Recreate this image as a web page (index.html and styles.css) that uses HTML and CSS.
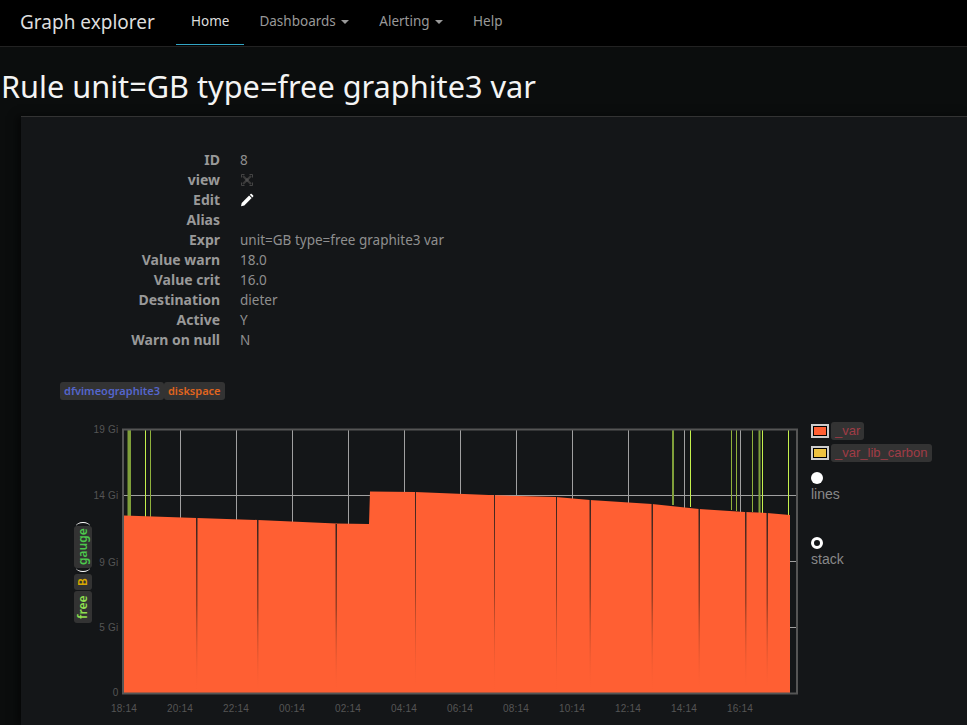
FILE: index.html
```html
<!DOCTYPE html>
<html lang="en">
<head>
    <meta charset="UTF-8">
    <title>Graph explorer</title>
    <link rel="stylesheet" href="styles.css">
</head>
<body>
    <nav class="navbar">
        <a class="brand" href="#">Graph explorer</a>
        <ul class="nav">
            <li class="active"><a href="#">Home</a></li>
            <li><a href="#">Dashboards <b class="caret"></b></a></li>
            <li><a href="#">Alerting <b class="caret"></b></a></li>
            <li><a href="#">Help</a></li>
        </ul>
    </nav>

    <h1>Rule unit=GB type=free graphite3 var</h1>

    <div class="panel">
        <dl class="rule-info">
            <dt>ID</dt><dd>8</dd>
            <dt>view</dt>
            <dd>
                <svg class="icon" viewBox="0 0 14 14" width="14" height="14">
                    <path d="M1.500 4.500v-3h3M9.500 1.500h3v3M12.500 9.500v3h-3M4.500 12.500h-3v-3" fill="none" stroke="#444" stroke-width="1"/>
                    <path d="M3 3l8 8M11 3l-8 8" stroke="#3a3a3a" stroke-width="2.200"/>
                    <path d="M5.500 5.500h3v3h-3z" fill="#4c4c4c"/>
                </svg>
            </dd>
            <dt>Edit</dt>
            <dd>
                <svg class="icon" viewBox="0 0 14 14" width="14" height="14">
                    <path d="M1 13.200l.7-3.300 7.400-7.400 2.600 2.600-7.400 7.400z" fill="#fff"/>
                    <path d="M9.800 1.800l.8-.8c.4-.3.8-.3 1.100 0l1.500 1.500c.3.3.3.7 0 1.100l-.8.8z" fill="#fff"/>
                </svg>
            </dd>
            <dt>Alias</dt><dd></dd>
            <dt>Expr</dt><dd>unit=GB type=free graphite3 var</dd>
            <dt>Value warn</dt><dd>18.0</dd>
            <dt>Value crit</dt><dd>16.0</dd>
            <dt>Destination</dt><dd>dieter</dd>
            <dt>Active</dt><dd>Y</dd>
            <dt>Warn on null</dt><dd>N</dd>
        </dl>

        <div class="tags">
            <span class="tag tag-host">dfvimeographite3</span>
            <span class="tag tag-plugin">diskspace</span>
        </div>

        <div class="chart-row">
            <div class="vlabel">
                <span class="tag tag-what">free</span>
                <span class="tag tag-unit">B</span>
                <span class="tag tag-type">gauge</span>
            </div>

            <svg class="chart" viewBox="92 420 719 295" width="719" height="295">
                <defs>
                    <linearGradient id="seam" x1="0" y1="0" x2="0" y2="1">
                        <stop offset="0" stop-color="#1a1c1e" stop-opacity="0.9"/>
                        <stop offset="0.5" stop-color="#5a2a1a" stop-opacity="0.6"/>
                        <stop offset="1" stop-color="#ff5f33" stop-opacity="0"/>
                    </linearGradient>
                </defs>

                <!-- grid -->
                <path class="grid" d="M180.500 430V693M236.500 430V693M292.500 430V693M348.500 430V693M404.500 430V693M460.500 430V693M516.500 430V693M572.500 430V693M628.500 430V693M684.500 430V693M740.500 430V693M124 495.500H796M124 561.500H796M124 627.500H796"/>

                <!-- warn on null spikes -->
                <path class="spike-thick" d="M128.500 430V516M130 430V516M673 430V505M759.500 430V513"/>
                <path class="spike-dim" d="M150.500 430V518M731.500 430V510M736.500 430V511M752.500 430V512"/>
                <path class="spike" d="M145.500 430V518M690.500 430V507M762.500 430V513M788.500 430V515"/>

                <polygon class="area" points="124,515.500 197,518 258,520 336,523.500 369,524 370,491.500 415,492 495,495.300 556,497 590,500 652,504 699,509 745,512 767,513 790,515 790,693 124,693"/>

                <rect x="196" y="518" width="1.500" height="175" fill="url(#seam)"/>
                <rect x="257" y="520" width="1.500" height="175" fill="url(#seam)"/>
                <rect x="335.500" y="524" width="1.500" height="169" fill="url(#seam)"/>
                <rect x="415" y="492" width="1" height="201" fill="url(#seam)"/>
                <rect x="494" y="495" width="1" height="198" fill="url(#seam)"/>
                <rect x="556" y="497" width="1" height="196" fill="url(#seam)"/>
                <rect x="589.500" y="500" width="1.500" height="193" fill="url(#seam)"/>
                <rect x="651.500" y="504" width="1.500" height="189" fill="url(#seam)"/>
                <rect x="698.500" y="509" width="1.500" height="184" fill="url(#seam)"/>
                <rect x="745" y="512" width="1.500" height="181" fill="url(#seam)"/>
                <rect x="766.500" y="513" width="1.500" height="180" fill="url(#seam)"/>

                <rect class="frame" x="123" y="429.500" width="674" height="264"/>

                <g class="y-ticks">
                    <text x="118.500" y="433">19 Gi</text>
                    <text x="118.500" y="499">14 Gi</text>
                    <text x="118.500" y="566">9 Gi</text>
                    <text x="118.500" y="631">5 Gi</text>
                    <text x="118.500" y="696">0</text>
                </g>
                <g class="x-ticks">
                    <text x="124" y="712">18:14</text>
                    <text x="180" y="712">20:14</text>
                    <text x="236" y="712">22:14</text>
                    <text x="292" y="712">00:14</text>
                    <text x="348" y="712">02:14</text>
                    <text x="404" y="712">04:14</text>
                    <text x="460" y="712">06:14</text>
                    <text x="516" y="712">08:14</text>
                    <text x="572" y="712">10:14</text>
                    <text x="628" y="712">12:14</text>
                    <text x="684" y="712">14:14</text>
                    <text x="740" y="712">16:14</text>
                </g>
            </svg>

            <div class="legend">
                <div class="legend-item">
                    <span class="swatch swatch-var"></span>
                    <span class="legend-name">_var</span>
                </div>
                <div class="legend-item">
                    <span class="swatch swatch-carbon"></span>
                    <span class="legend-name">_var_lib_carbon</span>
                </div>
                <label class="mode mode-lines">
                    <span class="radio"></span>
                    lines
                </label>
                <label class="mode mode-stack">
                    <span class="radio radio-on"></span>
                    stack
                </label>
            </div>
        </div>
    </div>
</body>
</html>
```

FILE: styles.css
```css
html {
    overflow: hidden;
}

body {
    font-family: "Noto Sans", "Open Sans", sans-serif;
    font-size: 13.500px;
    line-height: 20px;
    background: #0b0d0d;
    color: #999;
    margin: 0;
    height: 725px;
    overflow: hidden;
}

/* navbar */
.navbar {
    display: flex;
    height: 46px;
    background: #000;
    border-bottom: 1px solid #222;
}

.brand {
    color: #ddd;
    font-size: 19px;
    line-height: 44px;
    margin-left: 20px;
    width: 156px;
    text-decoration: none;
}

.nav {
    display: flex;
    list-style-type: none;
    margin: 0;
    padding: 0;
}

.nav a {
    display: block;
    padding: 0 15px;
    height: 45px;
    line-height: 42px;
    color: #999;
    text-decoration: none;
}

.nav .active a {
    color: #ddd;
    height: 44px;
    border-bottom: 1px solid #33a5c4;
}

.caret {
    display: inline-block;
    width: 0;
    height: 0;
    margin-left: 2px;
    vertical-align: middle;
    border-top: 4px solid #999;
    border-left: 4px solid transparent;
    border-right: 4px solid transparent;
}

h1 {
    color: #f4f4f4;
    font-size: 30.700px;
    font-weight: 400;
    line-height: 40px;
    margin: 19px 0 0 1px;
    height: 50px;
    white-space: nowrap;
}

/* main panel */
.panel {
    box-sizing: border-box;
    margin-left: 21px;
    padding-top: 33px;
    background: #141618;
    border-top: 1px solid #333;
    box-shadow: -4px 0 8px rgba(0, 0, 0, 0.5);
    height: 609px;
}

.rule-info {
    display: grid;
    grid-template-columns: 199px 1fr;
    column-gap: 20px;
    grid-auto-rows: 20px;
    margin: 0;
}

.rule-info dt {
    font-size: 14px;
    font-weight: 700;
    text-align: right;
    color: #999;
}

.rule-info dd {
    margin: 0;
    color: #8f8f8f;
}

.icon {
    display: block;
    margin-top: 3px;
}

/* tags */
.tags {
    display: flex;
    margin: 32px 0 20px 39px;
}

.tag {
    background: #333;
    border-radius: 3px;
    font-size: 11px;
    font-weight: 600;
    line-height: 18px;
    height: 18px;
    padding: 0 4px;
}

.tag-host { color: #5566cc; }
.tag-plugin { color: #e0651e; }
.tag-what { color: #8fe04f; }
.tag-unit { color: #d8a800; }

.tag-type {
    color: #4cc84c;
    position: relative;
}

.tag-type::before,
.tag-type::after {
    content: "";
    position: absolute;
    left: 2px;
    width: 14px;
    height: 3px;
    border: 0 solid #fff;
}

.tag-type::before {
    top: -4px;
    border-top-width: 1px;
    border-radius: 50% 50% 0 0 / 100% 100% 0 0;
}

.tag-type::after {
    bottom: -4px;
    border-bottom-width: 1px;
    border-radius: 0 0 50% 50% / 0 0 100% 100%;
}

/* chart */
.chart-row {
    display: flex;
    margin-left: 53px;
}

.vlabel {
    display: flex;
    align-self: flex-start;
    margin-top: 106px;
    writing-mode: vertical-rl;
    transform: rotate(180deg);
    width: 18px;
}

.vlabel .tag {
    width: 18px;
    padding: 0;
    font-size: 12px;
    text-align: center;
}

.vlabel .tag-what { height: 32px; }
.vlabel .tag-unit { height: 16px; margin-top: 1px; }
.vlabel .tag-type { height: 42px; margin-top: 6px; }

.chart {
    display: block;
    flex: none;
}

.grid {
    stroke: #a0a0a0;
    stroke-width: 1;
    fill: none;
}

.spike-thick {
    stroke: #7f9f3a;
    stroke-width: 2;
    fill: none;
}

.spike-dim {
    stroke: #8fb03c;
    stroke-width: 1;
    fill: none;
}

.spike {
    stroke: #c4f04c;
    stroke-width: 1;
    fill: none;
}

.area {
    fill: #ff5f33;
}

.frame {
    fill: none;
    stroke: #555;
    stroke-width: 2;
}

.chart text {
    font-family: "Liberation Sans", Arial, sans-serif;
    font-size: 10px;
    letter-spacing: 0.2px;
    fill: #555;
}

.y-ticks text {
    text-anchor: end;
}

.x-ticks text {
    text-anchor: middle;
}

/* legend */
.legend {
    display: flex;
    flex-direction: column;
    padding-top: 2px;
    font-family: "Liberation Sans", Arial, sans-serif;
}

.legend-item {
    display: flex;
    align-items: center;
    gap: 2px;
    height: 18px;
    margin-bottom: 4px;
}

.swatch {
    width: 14px;
    height: 10px;
    border: 2px solid #ccc;
    box-shadow: inset 0 0 0 1px #000;
}

.swatch-var { background: #ff5f33; }
.swatch-carbon { background: #edc240; }

.legend-name {
    background: #333;
    border-radius: 3px;
    color: #a03c46;
    font-size: 13px;
    line-height: 18px;
    padding: 0 4px;
    white-space: nowrap;
}

.mode {
    display: block;
    color: #888;
    font-size: 14px;
    line-height: 16px;
}

.mode-lines { margin-top: 6px; }
.mode-stack { margin-top: 35px; }

.radio {
    display: block;
    width: 12px;
    height: 12px;
    border-radius: 50%;
    background: #fff;
    margin-bottom: 2px;
}

.radio-on {
    box-sizing: border-box;
    background: #141618;
    border: 3px solid #fff;
}
```
